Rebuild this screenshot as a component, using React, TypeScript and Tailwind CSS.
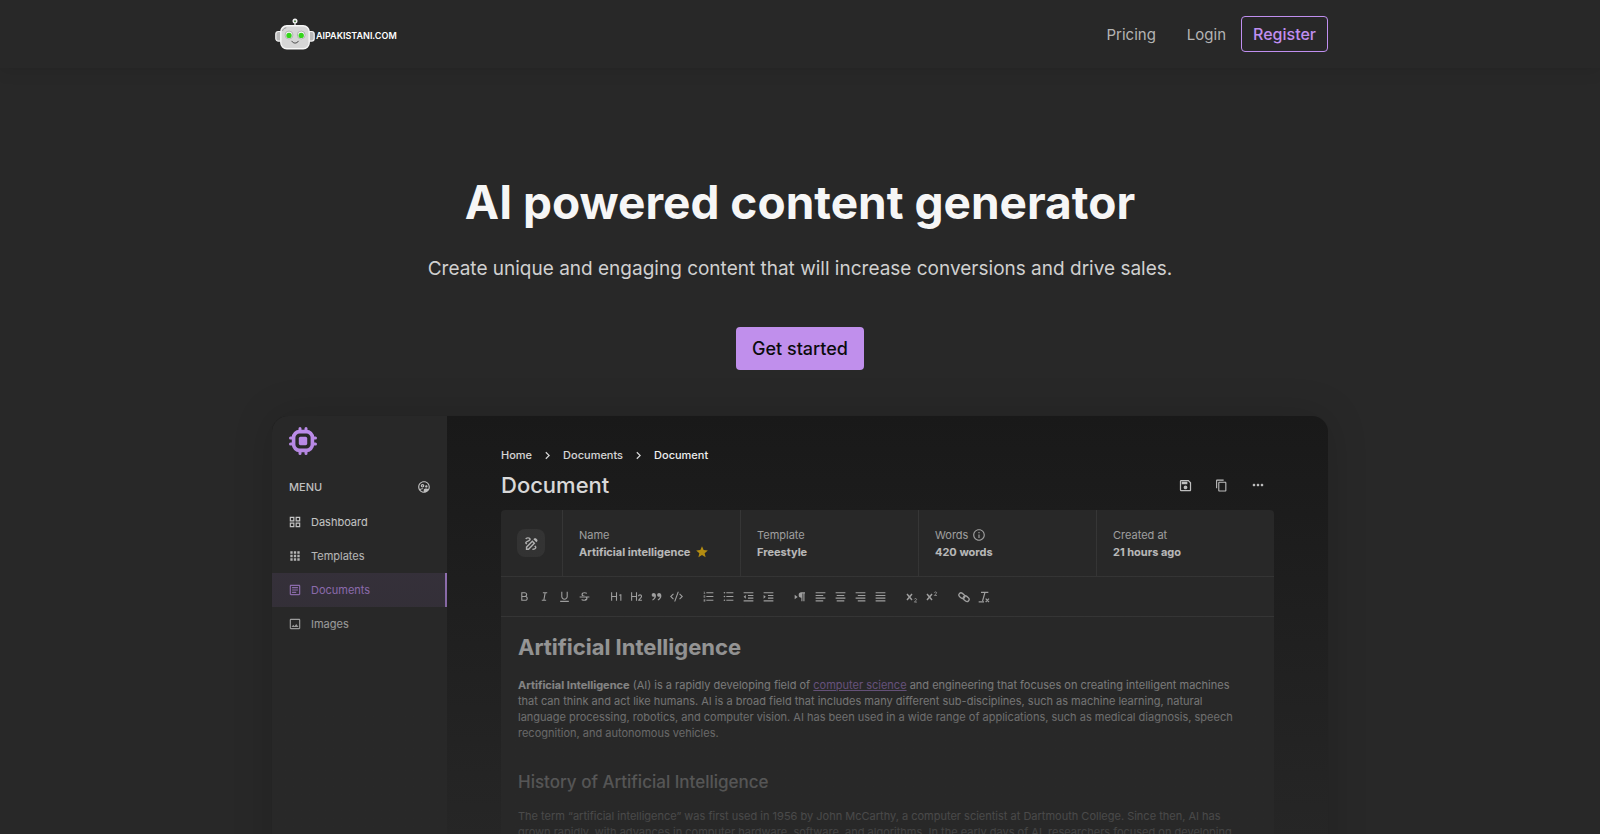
import type { ReactNode } from "react";
import type { IconType } from "react-icons";
import {
  RiAlignCenter,
  RiAlignJustify,
  RiAlignLeft,
  RiAlignRight,
  RiBold,
  RiCodeSSlashLine,
  RiDoubleQuotesR,
  RiH1,
  RiH2,
  RiIndentDecrease,
  RiIndentIncrease,
  RiItalic,
  RiListOrdered,
  RiListUnordered,
  RiStrikethrough,
  RiUnderline,
} from "react-icons/ri";
import {
  MdApps,
  MdChevronRight,
  MdContentCopy,
  MdInfoOutline,
  MdMoreHoriz,
  MdOutlineArticle,
  MdOutlineDraw,
  MdOutlineGridView,
  MdOutlineImage,
  MdOutlineSave,
  MdOutlineSupervisedUserCircle,
  MdStar,
} from "react-icons/md";

function RobotLogo() {
  return (
    <svg width="40" height="32" viewBox="0 0 40 32" aria-hidden="true">
      <path d="M20 9V4" stroke="#e4e4e4" strokeWidth="1.4" />
      <circle cx="20" cy="3" r="2.5" fill="#f2f2f2" />
      <circle cx="20" cy="3.2" r="1" fill="#4a7a42" />
      <rect x="0.8" y="13.5" width="7" height="9.6" rx="2.6" fill="#b9b9b9" stroke="#f4f4f4" strokeWidth="1.2" />
      <rect x="32.2" y="13.5" width="7" height="9.6" rx="2.6" fill="#b9b9b9" stroke="#f4f4f4" strokeWidth="1.2" />
      <rect x="5.8" y="7.8" width="28.4" height="23" rx="6" fill="#d6d6d6" stroke="#f7f7f7" strokeWidth="1.4" />
      <path d="M7.5 13c.6-2 1.8-3 3.8-3.2" stroke="#8a8a8a" strokeWidth="0.8" fill="none" />
      <circle cx="14" cy="17" r="3.9" fill="#fafafa" stroke="#8a8a8a" strokeWidth="0.6" />
      <circle cx="26.2" cy="17" r="3.9" fill="#fafafa" stroke="#8a8a8a" strokeWidth="0.6" />
      <circle cx="14" cy="17.4" r="2.7" fill="#34d41c" />
      <circle cx="26.2" cy="17.4" r="2.7" fill="#34d41c" />
      <path d="M16.8 23.2c1.6 2.600 5 2.600 6.600 0" stroke="#4a4a4a" strokeWidth="1" fill="none" strokeLinecap="round" />
    </svg>
  );
}

function ChipLogo() {
  return (
    <svg width="28" height="28" viewBox="0 0 28 28" fill="none" stroke="#c08ff0" aria-hidden="true">
      <rect x="4.6" y="4.6" width="18.8" height="18.8" rx="6" strokeWidth="3.6" />
      <rect x="9.800" y="9.800" width="8.400" height="8.400" rx="1.6" fill="#c08ff0" stroke="none" />
      <path
        d="M11 4V1.500M17 4V1.500M11 24v2.500M17 24v2.500M4 11H1.500M4 17H1.500M24 11h2.500M24 17h2.500"
        strokeWidth="3"
        strokeLinecap="round"
      />
    </svg>
  );
}

function DirectionIcon() {
  return (
    <svg width="12" height="12" viewBox="0 0 18 18" fill="currentColor" aria-hidden="true">
      <path d="M1 5.5 5.5 9 1 12.5z" />
      <path d="M16.5 2H11a4 4 0 0 0 0 8v5.5h1.7V3.7h1.3v11.8h1.7V3.7h.8z" />
    </svg>
  );
}

function ScriptIcon({ raised }: { raised?: boolean }) {
  return (
    <svg width="12" height="12" viewBox="0 0 18 18" fill="none" stroke="currentColor" aria-hidden="true">
      <path d="M1.5 4.5l7.5 9M9 4.5l-7.5 9" strokeWidth="2.200" />
      <path
        d={
          raised
            ? "M12.5 2.5c.4-1.6 3.4-1.5 3.4.2 0 1.3-2 2-3.4 3.9h3.9"
            : "M12.5 12.5c.4-1.6 3.4-1.5 3.4.2 0 1.3-2 2-3.4 3.9h3.9"
        }
        strokeWidth="1.200"
      />
    </svg>
  );
}

function ChainIcon() {
  return (
    <svg width="12" height="12" viewBox="0 0 18 18" fill="none" stroke="currentColor" strokeWidth="2" aria-hidden="true">
      <rect x="1" y="3.8" width="9.5" height="6.4" rx="3.2" transform="rotate(40 5.75 7)" />
      <rect x="7.5" y="8.3" width="9.5" height="6.4" rx="3.2" transform="rotate(40 12.25 11.5)" />
    </svg>
  );
}

function ClearFormatIcon() {
  return (
    <svg width="12" height="12" viewBox="0 0 18 18" fill="none" stroke="currentColor" strokeWidth="1.8" aria-hidden="true">
      <path d="M4.5 2h11M10.5 2 6.8 15M1 16.2h8M11.5 11.5l5 5M16.5 11.5l-5 5" />
    </svg>
  );
}

const ri = (Icon: IconType) => <Icon size={13} />;

const toolbar: { label: string; icon: ReactNode }[][] = [
  [
    { label: "Bold", icon: ri(RiBold) },
    { label: "Italic", icon: ri(RiItalic) },
    { label: "Underline", icon: ri(RiUnderline) },
    { label: "Strikethrough", icon: ri(RiStrikethrough) },
  ],
  [
    { label: "Heading 1", icon: ri(RiH1) },
    { label: "Heading 2", icon: ri(RiH2) },
    { label: "Quote", icon: ri(RiDoubleQuotesR) },
    { label: "Code", icon: ri(RiCodeSSlashLine) },
  ],
  [
    { label: "Ordered list", icon: ri(RiListOrdered) },
    { label: "Bullet list", icon: ri(RiListUnordered) },
    { label: "Decrease indent", icon: ri(RiIndentDecrease) },
    { label: "Increase indent", icon: ri(RiIndentIncrease) },
  ],
  [
    { label: "Text direction", icon: <DirectionIcon /> },
    { label: "Align left", icon: ri(RiAlignLeft) },
    { label: "Align center", icon: ri(RiAlignCenter) },
    { label: "Align right", icon: ri(RiAlignRight) },
    { label: "Justify", icon: ri(RiAlignJustify) },
  ],
  [
    { label: "Subscript", icon: <ScriptIcon /> },
    { label: "Superscript", icon: <ScriptIcon raised /> },
  ],
  [
    { label: "Link", icon: <ChainIcon /> },
    { label: "Clear formatting", icon: <ClearFormatIcon /> },
  ],
];

const menu: { label: string; Icon: IconType; active?: boolean }[] = [
  { label: "Dashboard", Icon: MdOutlineGridView },
  { label: "Templates", Icon: MdApps },
  { label: "Documents", Icon: MdOutlineArticle, active: true },
  { label: "Images", Icon: MdOutlineImage },
];

function Sidebar() {
  return (
    <aside className="w-[175px] shrink-0 bg-[#282828] pt-[11px]">
      <div className="px-[17px]">
        <ChipLogo />
      </div>
      <div className="mt-6 flex items-center justify-between px-4 pl-[17px] text-[11px] leading-4 font-medium text-[#d8d8d8]">
        <span>MENU</span>
        <MdOutlineSupervisedUserCircle size={14} />
      </div>
      <nav className="mt-[10px]">
        {menu.map(({ label, Icon, active }) => (
          <a
            key={label}
            href="#"
            className={
              active
                ? "flex h-[34px] items-center gap-[9px] border-r-2 border-[#c08ff0] bg-[#3b3442] pl-4 text-[11px] text-[#c08ff0]"
                : "flex h-[34px] items-center gap-[9px] pl-4 text-[11px] text-[#eeeeee]"
            }
          >
            <Icon size={14} />
            {label}
          </a>
        ))}
      </nav>
    </aside>
  );
}

function Cell({ title, value, titleIcon, valueIcon }: { title: string; value: string; titleIcon?: ReactNode; valueIcon?: ReactNode }) {
  return (
    <div className="flex flex-1 flex-col justify-center border-l border-[#3a3a3a] pt-px pl-4 text-[11px] leading-[17px]">
      <dt className="flex items-center gap-1 text-[#c4c4c4]">
        {title}
        {titleIcon}
      </dt>
      <dd className="flex items-center gap-[5px] font-bold text-[#f0f0f0]">
        {value}
        {valueIcon}
      </dd>
    </div>
  );
}

function Editor() {
  return (
    <div className="min-w-0 flex-1 px-[54px] pt-[31px]">
      <nav aria-label="Breadcrumb" className="flex items-center gap-2 text-[11px] leading-4 font-medium text-[#e4e4e4]">
        <a href="#">Home</a>
        <MdChevronRight size={15} />
        <a href="#">Documents</a>
        <MdChevronRight size={15} />
        <span className="text-white">Document</span>
      </nav>
      <div className="mt-2 flex items-center justify-between">
        <h2 className="text-[22px] leading-7 font-medium text-[#f6f6f6]">Document</h2>
        <div className="flex items-center gap-[22px] pr-2 text-[#d8d8d8]">
          <button type="button" aria-label="Save">
            <MdOutlineSave size={15} />
          </button>
          <button type="button" aria-label="Copy">
            <MdContentCopy size={13} />
          </button>
          <button type="button" aria-label="More">
            <MdMoreHoriz size={16} />
          </button>
        </div>
      </div>
      <section className="mt-[11px] rounded-t-sm bg-[#282828]">
        <dl className="flex h-[67px] border-b border-[#3a3a3a]">
          <div className="flex w-[61px] items-center pl-4">
            <span className="flex size-7 items-center justify-center rounded-lg bg-[#373737] text-[#e0e0e0]">
              <MdOutlineDraw size={17} />
            </span>
          </div>
          <Cell title="Name" value="Artificial intelligence" valueIcon={<MdStar size={14} className="text-[#eab308]" />} />
          <Cell title="Template" value="Freestyle" />
          <Cell title="Words" value="420 words" titleIcon={<MdInfoOutline size={14} />} />
          <Cell title="Created at" value="21 hours ago" />
        </dl>
        <div className="flex h-10 items-center gap-3 border-b border-[#3e3e3e] pl-[13px] text-[#e4e4e4]">
          {toolbar.map((group) => (
            <div key={group[0].label} className="flex">
              {group.map(({ label, icon }) => (
                <button key={label} type="button" aria-label={label} className="flex size-5 items-center justify-center">
                  {icon}
                </button>
              ))}
            </div>
          ))}
        </div>
        <article className="pr-6 pb-16 pl-[17px] text-[11px] leading-4 text-[#dedede]">
          <h3 className="pt-[14px] text-[22px] leading-8 font-bold text-[#f4f4f4]">Artificial Intelligence</h3>
          <p className="mt-[14px]">
            <strong className="font-bold text-[#f4f4f4]">Artificial Intelligence</strong> (AI) is a rapidly developing field of{" "}
            <a href="#" className="text-[#b184de] underline">
              computer science
            </a>{" "}
            and engineering that focuses on creating intelligent machines that can think and act like humans. AI is a broad field that
            includes many different sub-disciplines, such as machine learning, natural language processing, robotics, and computer
            vision. AI has been used in a wide range of applications, such as medical diagnosis, speech recognition, and autonomous
            vehicles.
          </p>
          <h4 className="mt-[29px] text-[17px] leading-6 font-medium">History of Artificial Intelligence</h4>
          <p className="mt-[14px]">
            The term “artificial intelligence” was first used in 1956 by John McCarthy, a computer scientist at Dartmouth College.
            Since then, AI has grown rapidly, with advances in computer hardware, software, and algorithms. In the early days of AI,
            researchers focused on developing
          </p>
        </article>
      </section>
    </div>
  );
}

export default function App() {
  return (
    <div className="min-h-screen bg-[#282828] font-['Inter',sans-serif]">
      <header className="shadow-[0_2px_16px_rgba(0,0,0,0.1)]">
        <div className="mx-auto flex h-[68px] max-w-[1056px] items-center justify-between">
          <a href="#" className="flex items-center gap-px pl-[3px]">
            <RobotLogo />
            <span className="pt-1 text-[9px] leading-3 font-semibold text-white">AIPAKISTANI.COM</span>
          </a>
          <nav className="flex items-baseline text-[15px] text-[#b4b4b4]">
            <a href="#" className="px-4">
              Pricing
            </a>
            <a href="#" className="px-[15px]">
              Login
            </a>
            <a
              href="#"
              className="flex h-9 items-center rounded-sm border border-[#c08ff0] px-[11px] text-base font-medium text-[#c08ff0]"
            >
              Register
            </a>
          </nav>
        </div>
      </header>
      <main className="mx-auto max-w-[1056px]">
        <div className="flex flex-col items-center pt-[106px] text-center">
          <h1 className="text-[46px] leading-[56px] font-bold text-[#f6f6f6]">AI powered content generator</h1>
          <p className="mt-[25px] text-[19px] leading-7 text-[#d0d0d0]">
            Create unique and engaging content that will increase conversions and drive sales.
          </p>
          <button type="button" className="mt-11 h-[43px] rounded-sm bg-[#c08fec] px-4 text-lg font-medium text-[#0c0c0c]">
            Get started
          </button>
        </div>
        <div className="relative mt-[46px] flex overflow-hidden rounded-2xl bg-[#191919] shadow-[0_0_40px_rgba(0,0,0,0.16)]">
          <Sidebar />
          <Editor />
          <div className="pointer-events-none absolute inset-0 bg-linear-to-b from-transparent to-[#282828]" />
        </div>
      </main>
    </div>
  );
}
